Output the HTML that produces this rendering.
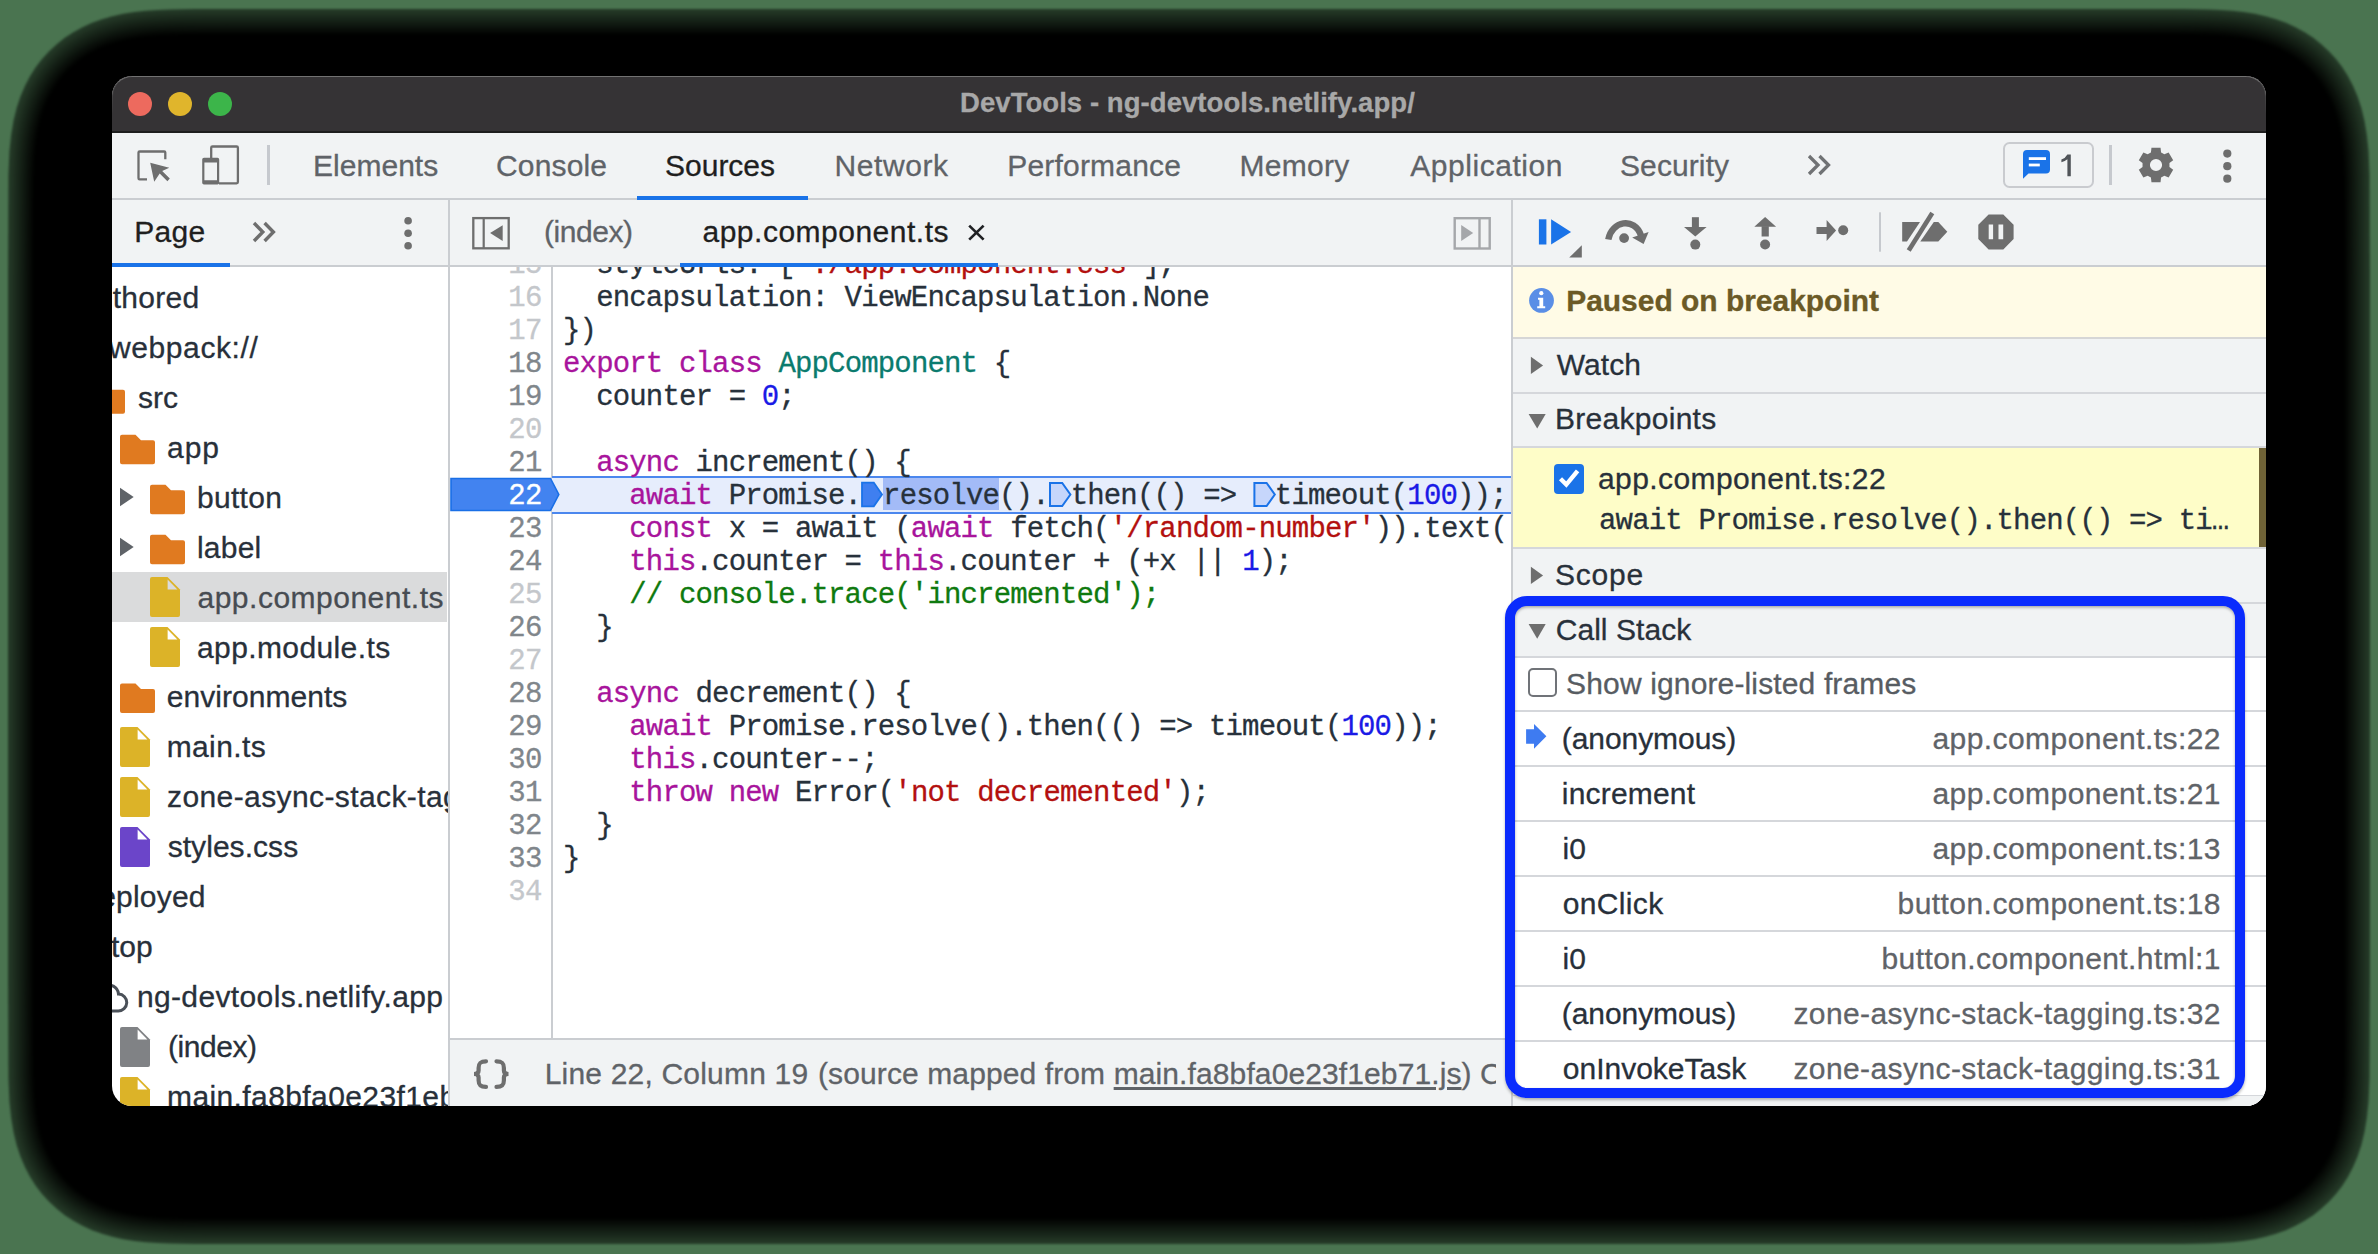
<!DOCTYPE html>
<html><head><meta charset="utf-8"><style>
html,body{margin:0;padding:0;}
body{width:2378px;height:1254px;overflow:hidden;position:relative;background:#4a7450;font-family:"Liberation Sans",sans-serif;}
.t{position:absolute;white-space:pre;-webkit-text-stroke-width:0.3px;}
.r{position:absolute;}
#ov{position:absolute;left:0;top:0;width:2378px;height:1254px;overflow:visible;}
</style></head><body>
<svg style="position:absolute;left:0;top:0;filter:blur(0.8px)" width="2378" height="1254" viewBox="0 0 2378 1254"><path d="M8.0,274.6 L8.4,175.1 L9.4,151.6 L11.2,134.5 L13.6,120.3 L16.7,107.7 L20.5,96.3 L25.0,85.8 L30.1,76.1 L35.8,67.1 L42.2,58.8 L49.1,51.2 L56.7,44.2 L64.7,37.8 L73.3,32.2 L82.4,27.2 L92.0,22.8 L102.0,19.2 L112.4,16.2 L123.1,13.8 L134.2,12.1 L145.7,10.8 L157.3,10.0 L169.3,9.5 L181.4,9.2 L193.6,9.1 L206.0,9.0 L218.5,9.0 L231.0,9.0 L2147.0,9.0 L2159.5,9.0 L2172.0,9.0 L2184.4,9.1 L2196.6,9.2 L2208.7,9.5 L2220.7,10.0 L2232.3,10.8 L2243.8,12.1 L2254.9,13.8 L2265.6,16.2 L2276.0,19.2 L2286.0,22.8 L2295.6,27.2 L2304.7,32.2 L2313.3,37.8 L2321.3,44.2 L2328.9,51.2 L2335.8,58.8 L2342.2,67.1 L2347.9,76.1 L2353.0,85.8 L2357.5,96.3 L2361.3,107.7 L2364.4,120.3 L2366.8,134.5 L2368.6,151.6 L2369.6,175.1 L2370.0,274.6 L2370.0,978.4 L2369.6,1077.9 L2368.6,1101.4 L2366.8,1118.5 L2364.4,1132.7 L2361.3,1145.3 L2357.5,1156.7 L2353.0,1167.2 L2347.9,1176.9 L2342.2,1185.9 L2335.8,1194.2 L2328.9,1201.8 L2321.3,1208.8 L2313.3,1215.2 L2304.7,1220.8 L2295.6,1225.8 L2286.0,1230.2 L2276.0,1233.8 L2265.6,1236.8 L2254.9,1239.2 L2243.8,1240.9 L2232.3,1242.2 L2220.7,1243.0 L2208.7,1243.5 L2196.6,1243.8 L2184.4,1243.9 L2172.0,1244.0 L2159.5,1244.0 L2147.0,1244.0 L231.0,1244.0 L218.5,1244.0 L206.0,1244.0 L193.6,1243.9 L181.4,1243.8 L169.3,1243.5 L157.3,1243.0 L145.7,1242.2 L134.2,1240.9 L123.1,1239.2 L112.4,1236.8 L102.0,1233.8 L92.0,1230.2 L82.4,1225.8 L73.3,1220.8 L64.7,1215.2 L56.7,1208.8 L49.1,1201.8 L42.2,1194.2 L35.8,1185.9 L30.1,1176.9 L25.0,1167.2 L20.5,1156.7 L16.7,1145.3 L13.6,1132.7 L11.2,1118.5 L9.4,1101.4 L8.4,1077.9 L8.0,978.4 Z" fill="rgb(37, 58, 40)"/><path d="M9.9,274.6 L10.2,175.5 L11.3,152.1 L13.0,135.1 L15.4,121.0 L18.5,108.5 L22.3,97.2 L26.7,86.8 L31.8,77.2 L37.5,68.3 L43.8,60.0 L50.7,52.5 L58.1,45.5 L66.1,39.3 L74.7,33.7 L83.7,28.7 L93.1,24.5 L103.1,20.9 L113.4,17.9 L124.0,15.6 L135.1,13.9 L146.4,12.7 L158.0,11.9 L169.8,11.4 L181.8,11.1 L194.0,11.0 L206.2,10.9 L218.6,10.9 L231.0,10.9 L2147.0,10.9 L2159.4,10.9 L2171.8,10.9 L2184.0,11.0 L2196.2,11.1 L2208.2,11.4 L2220.0,11.9 L2231.6,12.7 L2242.9,13.9 L2254.0,15.6 L2264.6,17.9 L2274.9,20.9 L2284.9,24.5 L2294.3,28.7 L2303.3,33.7 L2311.9,39.3 L2319.9,45.5 L2327.3,52.5 L2334.2,60.0 L2340.5,68.3 L2346.2,77.2 L2351.3,86.8 L2355.7,97.2 L2359.5,108.5 L2362.6,121.0 L2365.0,135.1 L2366.7,152.1 L2367.8,175.5 L2368.1,274.6 L2368.1,978.4 L2367.8,1077.5 L2366.7,1100.9 L2365.0,1117.9 L2362.6,1132.0 L2359.5,1144.5 L2355.7,1155.8 L2351.3,1166.2 L2346.2,1175.8 L2340.5,1184.7 L2334.2,1193.0 L2327.3,1200.5 L2319.9,1207.5 L2311.9,1213.7 L2303.3,1219.3 L2294.3,1224.3 L2284.9,1228.5 L2274.9,1232.1 L2264.6,1235.1 L2254.0,1237.4 L2242.9,1239.1 L2231.6,1240.3 L2220.0,1241.1 L2208.2,1241.6 L2196.2,1241.9 L2184.0,1242.0 L2171.8,1242.1 L2159.4,1242.1 L2147.0,1242.1 L231.0,1242.1 L218.6,1242.1 L206.2,1242.1 L194.0,1242.0 L181.8,1241.9 L169.8,1241.6 L158.0,1241.1 L146.4,1240.3 L135.1,1239.1 L124.0,1237.4 L113.4,1235.1 L103.1,1232.1 L93.1,1228.5 L83.7,1224.3 L74.7,1219.3 L66.1,1213.7 L58.1,1207.5 L50.7,1200.5 L43.8,1193.0 L37.5,1184.7 L31.8,1175.8 L26.7,1166.2 L22.3,1155.8 L18.5,1144.5 L15.4,1132.0 L13.0,1117.9 L11.3,1100.9 L10.2,1077.5 L9.9,978.4 Z" fill="rgb(34, 54, 37)"/><path d="M11.8,274.6 L12.1,175.9 L13.2,152.6 L14.9,135.7 L17.3,121.6 L20.4,109.2 L24.1,98.0 L28.5,87.7 L33.5,78.2 L39.1,69.4 L45.4,61.2 L52.2,53.8 L59.6,46.9 L67.5,40.7 L76.0,35.2 L84.9,30.3 L94.3,26.1 L104.1,22.6 L114.4,19.7 L125.0,17.4 L135.9,15.7 L147.1,14.5 L158.6,13.7 L170.3,13.3 L182.2,13.0 L194.3,12.9 L206.5,12.8 L218.7,12.8 L231.0,12.8 L2147.0,12.8 L2159.3,12.8 L2171.5,12.8 L2183.7,12.9 L2195.8,13.0 L2207.7,13.3 L2219.4,13.7 L2230.9,14.5 L2242.1,15.7 L2253.0,17.4 L2263.6,19.7 L2273.9,22.6 L2283.7,26.1 L2293.1,30.3 L2302.0,35.2 L2310.5,40.7 L2318.4,46.9 L2325.8,53.8 L2332.6,61.2 L2338.9,69.4 L2344.5,78.2 L2349.5,87.7 L2353.9,98.0 L2357.6,109.2 L2360.7,121.6 L2363.1,135.7 L2364.8,152.6 L2365.9,175.9 L2366.2,274.6 L2366.2,978.4 L2365.9,1077.1 L2364.8,1100.4 L2363.1,1117.3 L2360.7,1131.4 L2357.6,1143.8 L2353.9,1155.0 L2349.5,1165.3 L2344.5,1174.8 L2338.9,1183.6 L2332.6,1191.8 L2325.8,1199.2 L2318.4,1206.1 L2310.5,1212.3 L2302.0,1217.8 L2293.1,1222.7 L2283.7,1226.9 L2273.9,1230.4 L2263.6,1233.3 L2253.0,1235.6 L2242.1,1237.3 L2230.9,1238.5 L2219.4,1239.3 L2207.7,1239.7 L2195.8,1240.0 L2183.7,1240.1 L2171.5,1240.2 L2159.3,1240.2 L2147.0,1240.2 L231.0,1240.2 L218.7,1240.2 L206.5,1240.2 L194.3,1240.1 L182.2,1240.0 L170.3,1239.7 L158.6,1239.3 L147.1,1238.5 L135.9,1237.3 L125.0,1235.6 L114.4,1233.3 L104.1,1230.4 L94.3,1226.9 L84.9,1222.7 L76.0,1217.8 L67.5,1212.3 L59.6,1206.1 L52.2,1199.2 L45.4,1191.8 L39.1,1183.6 L33.5,1174.8 L28.5,1165.3 L24.1,1155.0 L20.4,1143.8 L17.3,1131.4 L14.9,1117.3 L13.2,1100.4 L12.1,1077.1 L11.8,978.4 Z" fill="rgb(32, 50, 34)"/><path d="M13.7,274.6 L14.0,176.2 L15.0,153.0 L16.7,136.3 L19.1,122.3 L22.2,110.0 L25.9,98.9 L30.2,88.7 L35.2,79.2 L40.8,70.5 L47.0,62.5 L53.8,55.1 L61.1,48.3 L69.0,42.2 L77.3,36.7 L86.2,31.9 L95.5,27.8 L105.2,24.3 L115.4,21.5 L125.9,19.2 L136.7,17.6 L147.8,16.4 L159.2,15.6 L170.8,15.1 L182.6,14.9 L194.6,14.8 L206.7,14.7 L218.8,14.7 L231.0,14.7 L2147.0,14.7 L2159.2,14.7 L2171.3,14.7 L2183.4,14.8 L2195.4,14.9 L2207.2,15.1 L2218.8,15.6 L2230.2,16.4 L2241.3,17.6 L2252.1,19.2 L2262.6,21.5 L2272.8,24.3 L2282.5,27.8 L2291.8,31.9 L2300.7,36.7 L2309.0,42.2 L2316.9,48.3 L2324.2,55.1 L2331.0,62.5 L2337.2,70.5 L2342.8,79.2 L2347.8,88.7 L2352.1,98.9 L2355.8,110.0 L2358.9,122.3 L2361.3,136.3 L2363.0,153.0 L2364.0,176.2 L2364.3,274.6 L2364.3,978.4 L2364.0,1076.8 L2363.0,1100.0 L2361.3,1116.7 L2358.9,1130.7 L2355.8,1143.0 L2352.1,1154.1 L2347.8,1164.3 L2342.8,1173.8 L2337.2,1182.5 L2331.0,1190.5 L2324.2,1197.9 L2316.9,1204.7 L2309.0,1210.8 L2300.7,1216.3 L2291.8,1221.1 L2282.5,1225.2 L2272.8,1228.7 L2262.6,1231.5 L2252.1,1233.8 L2241.3,1235.4 L2230.2,1236.6 L2218.8,1237.4 L2207.2,1237.9 L2195.4,1238.1 L2183.4,1238.2 L2171.3,1238.3 L2159.2,1238.3 L2147.0,1238.3 L231.0,1238.3 L218.8,1238.3 L206.7,1238.3 L194.6,1238.2 L182.6,1238.1 L170.8,1237.9 L159.2,1237.4 L147.8,1236.6 L136.7,1235.4 L125.9,1233.8 L115.4,1231.5 L105.2,1228.7 L95.5,1225.2 L86.2,1221.1 L77.3,1216.3 L69.0,1210.8 L61.1,1204.7 L53.8,1197.9 L47.0,1190.5 L40.8,1182.5 L35.2,1173.8 L30.2,1164.3 L25.9,1154.1 L22.2,1143.0 L19.1,1130.7 L16.7,1116.7 L15.0,1100.0 L14.0,1076.8 L13.7,978.4 Z" fill="rgb(29, 45, 31)"/><path d="M15.6,274.6 L15.9,176.6 L16.9,153.5 L18.6,136.8 L21.0,123.0 L24.0,110.8 L27.7,99.7 L32.0,89.6 L36.9,80.3 L42.5,71.6 L48.6,63.7 L55.3,56.4 L62.6,49.7 L70.4,43.6 L78.7,38.3 L87.4,33.5 L96.7,29.5 L106.3,26.0 L116.4,23.2 L126.8,21.0 L137.5,19.4 L148.6,18.2 L159.8,17.5 L171.4,17.0 L183.1,16.8 L194.9,16.7 L206.9,16.6 L218.9,16.6 L231.0,16.6 L2147.0,16.6 L2159.1,16.6 L2171.1,16.6 L2183.1,16.7 L2194.9,16.8 L2206.6,17.0 L2218.2,17.5 L2229.4,18.2 L2240.5,19.4 L2251.2,21.0 L2261.6,23.2 L2271.7,26.0 L2281.3,29.5 L2290.6,33.5 L2299.3,38.3 L2307.6,43.6 L2315.4,49.7 L2322.7,56.4 L2329.4,63.7 L2335.5,71.6 L2341.1,80.3 L2346.0,89.6 L2350.3,99.7 L2354.0,110.8 L2357.0,123.0 L2359.4,136.8 L2361.1,153.5 L2362.1,176.6 L2362.4,274.6 L2362.4,978.4 L2362.1,1076.4 L2361.1,1099.5 L2359.4,1116.2 L2357.0,1130.0 L2354.0,1142.2 L2350.3,1153.3 L2346.0,1163.4 L2341.1,1172.7 L2335.5,1181.4 L2329.4,1189.3 L2322.7,1196.6 L2315.4,1203.3 L2307.6,1209.4 L2299.3,1214.7 L2290.6,1219.5 L2281.3,1223.5 L2271.7,1227.0 L2261.6,1229.8 L2251.2,1232.0 L2240.5,1233.6 L2229.4,1234.8 L2218.2,1235.5 L2206.6,1236.0 L2194.9,1236.2 L2183.1,1236.3 L2171.1,1236.4 L2159.1,1236.4 L2147.0,1236.4 L231.0,1236.4 L218.9,1236.4 L206.9,1236.4 L194.9,1236.3 L183.1,1236.2 L171.4,1236.0 L159.8,1235.5 L148.6,1234.8 L137.5,1233.6 L126.8,1232.0 L116.4,1229.8 L106.3,1227.0 L96.7,1223.5 L87.4,1219.5 L78.7,1214.7 L70.4,1209.4 L62.6,1203.3 L55.3,1196.6 L48.6,1189.3 L42.5,1181.4 L36.9,1172.7 L32.0,1163.4 L27.7,1153.3 L24.0,1142.2 L21.0,1130.0 L18.6,1116.2 L16.9,1099.5 L15.9,1076.4 L15.6,978.4 Z" fill="rgb(26, 41, 28)"/><path d="M17.5,274.6 L17.8,177.0 L18.8,154.0 L20.5,137.4 L22.8,123.6 L25.8,111.5 L29.4,100.6 L33.7,90.6 L38.6,81.3 L44.1,72.8 L50.2,64.9 L56.8,57.7 L64.1,51.1 L71.8,45.1 L80.0,39.8 L88.7,35.1 L97.9,31.1 L107.4,27.7 L117.4,25.0 L127.7,22.8 L138.4,21.2 L149.3,20.1 L160.5,19.4 L171.9,18.9 L183.5,18.7 L195.2,18.5 L207.1,18.5 L219.0,18.5 L231.0,18.5 L2147.0,18.5 L2159.0,18.5 L2170.9,18.5 L2182.8,18.5 L2194.5,18.7 L2206.1,18.9 L2217.5,19.4 L2228.7,20.1 L2239.6,21.2 L2250.3,22.8 L2260.6,25.0 L2270.6,27.7 L2280.1,31.1 L2289.3,35.1 L2298.0,39.8 L2306.2,45.1 L2313.9,51.1 L2321.2,57.7 L2327.8,64.9 L2333.9,72.8 L2339.4,81.3 L2344.3,90.6 L2348.6,100.6 L2352.2,111.5 L2355.2,123.6 L2357.5,137.4 L2359.2,154.0 L2360.2,177.0 L2360.5,274.6 L2360.5,978.4 L2360.2,1076.0 L2359.2,1099.0 L2357.5,1115.6 L2355.2,1129.4 L2352.2,1141.5 L2348.6,1152.4 L2344.3,1162.4 L2339.4,1171.7 L2333.9,1180.2 L2327.8,1188.1 L2321.2,1195.3 L2313.9,1201.9 L2306.2,1207.9 L2298.0,1213.2 L2289.3,1217.9 L2280.1,1221.9 L2270.6,1225.3 L2260.6,1228.0 L2250.3,1230.2 L2239.6,1231.8 L2228.7,1232.9 L2217.5,1233.6 L2206.1,1234.1 L2194.5,1234.3 L2182.8,1234.5 L2170.9,1234.5 L2159.0,1234.5 L2147.0,1234.5 L231.0,1234.5 L219.0,1234.5 L207.1,1234.5 L195.2,1234.5 L183.5,1234.3 L171.9,1234.1 L160.5,1233.6 L149.3,1232.9 L138.4,1231.8 L127.7,1230.2 L117.4,1228.0 L107.4,1225.3 L97.9,1221.9 L88.7,1217.9 L80.0,1213.2 L71.8,1207.9 L64.1,1201.9 L56.8,1195.3 L50.2,1188.1 L44.1,1180.2 L38.6,1171.7 L33.7,1162.4 L29.4,1152.4 L25.8,1141.5 L22.8,1129.4 L20.5,1115.6 L18.8,1099.0 L17.8,1076.0 L17.5,978.4 Z" fill="rgb(23, 37, 25)"/><path d="M19.4,274.6 L19.7,177.4 L20.7,154.5 L22.3,138.0 L24.7,124.3 L27.6,112.3 L31.2,101.5 L35.5,91.5 L40.3,82.4 L45.8,73.9 L51.8,66.1 L58.4,59.0 L65.5,52.5 L73.2,46.6 L81.3,41.3 L90.0,36.7 L99.0,32.8 L108.5,29.5 L118.4,26.8 L128.6,24.6 L139.2,23.1 L150.0,22.0 L161.1,21.2 L172.4,20.8 L183.9,20.6 L195.5,20.4 L207.3,20.4 L219.1,20.4 L231.0,20.4 L2147.0,20.4 L2158.9,20.4 L2170.7,20.4 L2182.5,20.4 L2194.1,20.6 L2205.6,20.8 L2216.9,21.2 L2228.0,22.0 L2238.8,23.1 L2249.4,24.6 L2259.6,26.8 L2269.5,29.5 L2279.0,32.8 L2288.0,36.7 L2296.7,41.3 L2304.8,46.6 L2312.5,52.5 L2319.6,59.0 L2326.2,66.1 L2332.2,73.9 L2337.7,82.4 L2342.5,91.5 L2346.8,101.5 L2350.4,112.3 L2353.3,124.3 L2355.7,138.0 L2357.3,154.5 L2358.3,177.4 L2358.6,274.6 L2358.6,978.4 L2358.3,1075.6 L2357.3,1098.5 L2355.7,1115.0 L2353.3,1128.7 L2350.4,1140.7 L2346.8,1151.5 L2342.5,1161.5 L2337.7,1170.6 L2332.2,1179.1 L2326.2,1186.9 L2319.6,1194.0 L2312.5,1200.5 L2304.8,1206.4 L2296.7,1211.7 L2288.0,1216.3 L2279.0,1220.2 L2269.5,1223.5 L2259.6,1226.2 L2249.4,1228.4 L2238.8,1229.9 L2228.0,1231.0 L2216.9,1231.8 L2205.6,1232.2 L2194.1,1232.4 L2182.5,1232.6 L2170.7,1232.6 L2158.9,1232.6 L2147.0,1232.6 L231.0,1232.6 L219.1,1232.6 L207.3,1232.6 L195.5,1232.6 L183.9,1232.4 L172.4,1232.2 L161.1,1231.8 L150.0,1231.0 L139.2,1229.9 L128.6,1228.4 L118.4,1226.2 L108.5,1223.5 L99.0,1220.2 L90.0,1216.3 L81.3,1211.7 L73.2,1206.4 L65.5,1200.5 L58.4,1194.0 L51.8,1186.9 L45.8,1179.1 L40.3,1170.6 L35.5,1161.5 L31.2,1151.5 L27.6,1140.7 L24.7,1128.7 L22.3,1115.0 L20.7,1098.5 L19.7,1075.6 L19.4,978.4 Z" fill="rgb(21, 32, 22)"/><path d="M21.2,274.6 L21.6,177.7 L22.6,155.0 L24.2,138.6 L26.5,125.0 L29.4,113.1 L33.0,102.3 L37.2,92.5 L42.0,83.4 L47.4,75.1 L53.4,67.3 L59.9,60.3 L67.0,53.8 L74.6,48.0 L82.7,42.9 L91.2,38.3 L100.2,34.4 L109.6,31.2 L119.4,28.5 L129.5,26.5 L140.0,24.9 L150.7,23.8 L161.7,23.1 L172.9,22.7 L184.3,22.4 L195.9,22.3 L207.5,22.3 L219.2,22.3 L231.0,22.3 L2147.0,22.3 L2158.8,22.3 L2170.5,22.3 L2182.1,22.3 L2193.7,22.4 L2205.1,22.7 L2216.3,23.1 L2227.3,23.8 L2238.0,24.9 L2248.5,26.5 L2258.6,28.5 L2268.4,31.2 L2277.8,34.4 L2286.8,38.3 L2295.3,42.9 L2303.4,48.0 L2311.0,53.8 L2318.1,60.3 L2324.6,67.3 L2330.6,75.1 L2336.0,83.4 L2340.8,92.5 L2345.0,102.3 L2348.6,113.1 L2351.5,125.0 L2353.8,138.6 L2355.4,155.0 L2356.4,177.7 L2356.8,274.6 L2356.8,978.4 L2356.4,1075.3 L2355.4,1098.0 L2353.8,1114.4 L2351.5,1128.0 L2348.6,1139.9 L2345.0,1150.7 L2340.8,1160.5 L2336.0,1169.6 L2330.6,1177.9 L2324.6,1185.7 L2318.1,1192.7 L2311.0,1199.2 L2303.4,1205.0 L2295.3,1210.1 L2286.8,1214.7 L2277.8,1218.6 L2268.4,1221.8 L2258.6,1224.5 L2248.5,1226.5 L2238.0,1228.1 L2227.3,1229.2 L2216.3,1229.9 L2205.1,1230.3 L2193.7,1230.6 L2182.1,1230.7 L2170.5,1230.7 L2158.8,1230.7 L2147.0,1230.7 L231.0,1230.7 L219.2,1230.7 L207.5,1230.7 L195.9,1230.7 L184.3,1230.6 L172.9,1230.3 L161.7,1229.9 L150.7,1229.2 L140.0,1228.1 L129.5,1226.5 L119.4,1224.5 L109.6,1221.8 L100.2,1218.6 L91.2,1214.7 L82.7,1210.1 L74.6,1205.0 L67.0,1199.2 L59.9,1192.7 L53.4,1185.7 L47.4,1177.9 L42.0,1169.6 L37.2,1160.5 L33.0,1150.7 L29.4,1139.9 L26.5,1128.0 L24.2,1114.4 L22.6,1098.0 L21.6,1075.3 L21.2,978.4 Z" fill="rgb(18, 28, 19)"/><path d="M23.1,274.6 L23.5,178.1 L24.4,155.5 L26.1,139.2 L28.4,125.7 L31.3,113.9 L34.8,103.2 L39.0,93.5 L43.7,84.5 L49.1,76.2 L55.0,68.6 L61.5,61.6 L68.5,55.2 L76.0,49.5 L84.0,44.4 L92.5,39.9 L101.4,36.1 L110.7,32.9 L120.4,30.3 L130.5,28.3 L140.8,26.7 L151.5,25.7 L162.3,25.0 L173.5,24.6 L184.7,24.3 L196.2,24.2 L207.7,24.2 L219.3,24.2 L231.0,24.1 L2147.0,24.1 L2158.7,24.2 L2170.3,24.2 L2181.8,24.2 L2193.3,24.3 L2204.5,24.6 L2215.7,25.0 L2226.5,25.7 L2237.2,26.7 L2247.5,28.3 L2257.6,30.3 L2267.3,32.9 L2276.6,36.1 L2285.5,39.9 L2294.0,44.4 L2302.0,49.5 L2309.5,55.2 L2316.5,61.6 L2323.0,68.6 L2328.9,76.2 L2334.3,84.5 L2339.0,93.5 L2343.2,103.2 L2346.7,113.9 L2349.6,125.7 L2351.9,139.2 L2353.6,155.5 L2354.5,178.1 L2354.9,274.6 L2354.9,978.4 L2354.5,1074.9 L2353.6,1097.5 L2351.9,1113.8 L2349.6,1127.3 L2346.7,1139.1 L2343.2,1149.8 L2339.0,1159.5 L2334.3,1168.5 L2328.9,1176.8 L2323.0,1184.4 L2316.5,1191.4 L2309.5,1197.8 L2302.0,1203.5 L2294.0,1208.6 L2285.5,1213.1 L2276.6,1216.9 L2267.3,1220.1 L2257.6,1222.7 L2247.5,1224.7 L2237.2,1226.3 L2226.5,1227.3 L2215.7,1228.0 L2204.5,1228.4 L2193.3,1228.7 L2181.8,1228.8 L2170.3,1228.8 L2158.7,1228.8 L2147.0,1228.9 L231.0,1228.9 L219.3,1228.8 L207.7,1228.8 L196.2,1228.8 L184.7,1228.7 L173.5,1228.4 L162.3,1228.0 L151.5,1227.3 L140.8,1226.3 L130.5,1224.7 L120.4,1222.7 L110.7,1220.1 L101.4,1216.9 L92.5,1213.1 L84.0,1208.6 L76.0,1203.5 L68.5,1197.8 L61.5,1191.4 L55.0,1184.4 L49.1,1176.8 L43.7,1168.5 L39.0,1159.5 L34.8,1149.8 L31.3,1139.1 L28.4,1127.3 L26.1,1113.8 L24.4,1097.5 L23.5,1074.9 L23.1,978.4 Z" fill="rgb(15, 24, 16)"/><path d="M25.0,274.6 L25.4,178.5 L26.3,156.0 L27.9,139.8 L30.2,126.4 L33.1,114.6 L36.6,104.1 L40.7,94.4 L45.4,85.5 L50.7,77.4 L56.6,69.8 L63.0,62.9 L70.0,56.6 L77.4,51.0 L85.4,46.0 L93.8,41.6 L102.6,37.8 L111.8,34.6 L121.4,32.1 L131.4,30.1 L141.6,28.6 L152.2,27.5 L163.0,26.9 L174.0,26.4 L185.2,26.2 L196.5,26.1 L207.9,26.1 L219.5,26.0 L231.0,26.0 L2147.0,26.0 L2158.5,26.0 L2170.1,26.1 L2181.5,26.1 L2192.8,26.2 L2204.0,26.4 L2215.0,26.9 L2225.8,27.5 L2236.4,28.6 L2246.6,30.1 L2256.6,32.1 L2266.2,34.6 L2275.4,37.8 L2284.2,41.6 L2292.6,46.0 L2300.6,51.0 L2308.0,56.6 L2315.0,62.9 L2321.4,69.8 L2327.3,77.4 L2332.6,85.5 L2337.3,94.4 L2341.4,104.1 L2344.9,114.6 L2347.8,126.4 L2350.1,139.8 L2351.7,156.0 L2352.6,178.5 L2353.0,274.6 L2353.0,978.4 L2352.6,1074.5 L2351.7,1097.0 L2350.1,1113.2 L2347.8,1126.6 L2344.9,1138.4 L2341.4,1148.9 L2337.3,1158.6 L2332.6,1167.5 L2327.3,1175.6 L2321.4,1183.2 L2315.0,1190.1 L2308.0,1196.4 L2300.6,1202.0 L2292.6,1207.0 L2284.2,1211.4 L2275.4,1215.2 L2266.2,1218.4 L2256.6,1220.9 L2246.6,1222.9 L2236.4,1224.4 L2225.8,1225.5 L2215.0,1226.1 L2204.0,1226.6 L2192.8,1226.8 L2181.5,1226.9 L2170.1,1226.9 L2158.5,1227.0 L2147.0,1227.0 L231.0,1227.0 L219.5,1227.0 L207.9,1226.9 L196.5,1226.9 L185.2,1226.8 L174.0,1226.6 L163.0,1226.1 L152.2,1225.5 L141.6,1224.4 L131.4,1222.9 L121.4,1220.9 L111.8,1218.4 L102.6,1215.2 L93.8,1211.4 L85.4,1207.0 L77.4,1202.0 L70.0,1196.4 L63.0,1190.1 L56.6,1183.2 L50.7,1175.6 L45.4,1167.5 L40.7,1158.6 L36.6,1148.9 L33.1,1138.4 L30.2,1126.6 L27.9,1113.2 L26.3,1097.0 L25.4,1074.5 L25.0,978.4 Z" fill="rgb(12, 19, 13)"/><path d="M26.9,274.6 L27.2,178.9 L28.2,156.5 L29.8,140.4 L32.0,127.1 L34.9,115.4 L38.4,105.0 L42.5,95.4 L47.1,86.6 L52.4,78.5 L58.2,71.1 L64.6,64.2 L71.5,58.0 L78.8,52.5 L86.7,47.5 L95.0,43.2 L103.8,39.5 L112.9,36.4 L122.4,33.8 L132.3,31.9 L142.5,30.4 L152.9,29.4 L163.6,28.7 L174.5,28.3 L185.6,28.1 L196.8,28.0 L208.2,28.0 L219.6,27.9 L231.0,27.9 L2147.0,27.9 L2158.4,27.9 L2169.8,28.0 L2181.2,28.0 L2192.4,28.1 L2203.5,28.3 L2214.4,28.7 L2225.1,29.4 L2235.5,30.4 L2245.7,31.9 L2255.6,33.8 L2265.1,36.4 L2274.2,39.5 L2283.0,43.2 L2291.3,47.5 L2299.2,52.5 L2306.5,58.0 L2313.4,64.2 L2319.8,71.1 L2325.6,78.5 L2330.9,86.6 L2335.5,95.4 L2339.6,105.0 L2343.1,115.4 L2346.0,127.1 L2348.2,140.4 L2349.8,156.5 L2350.8,178.9 L2351.1,274.6 L2351.1,978.4 L2350.8,1074.1 L2349.8,1096.5 L2348.2,1112.6 L2346.0,1125.9 L2343.1,1137.6 L2339.6,1148.0 L2335.5,1157.6 L2330.9,1166.4 L2325.6,1174.5 L2319.8,1181.9 L2313.4,1188.8 L2306.5,1195.0 L2299.2,1200.5 L2291.3,1205.5 L2283.0,1209.8 L2274.2,1213.5 L2265.1,1216.6 L2255.6,1219.2 L2245.7,1221.1 L2235.5,1222.6 L2225.1,1223.6 L2214.4,1224.3 L2203.5,1224.7 L2192.4,1224.9 L2181.2,1225.0 L2169.8,1225.0 L2158.4,1225.1 L2147.0,1225.1 L231.0,1225.1 L219.6,1225.1 L208.2,1225.0 L196.8,1225.0 L185.6,1224.9 L174.5,1224.7 L163.6,1224.3 L152.9,1223.6 L142.5,1222.6 L132.3,1221.1 L122.4,1219.2 L112.9,1216.6 L103.8,1213.5 L95.0,1209.8 L86.7,1205.5 L78.8,1200.5 L71.5,1195.0 L64.6,1188.8 L58.2,1181.9 L52.4,1174.5 L47.1,1166.4 L42.5,1157.6 L38.4,1148.0 L34.9,1137.6 L32.0,1125.9 L29.8,1112.6 L28.2,1096.5 L27.2,1074.1 L26.9,978.4 Z" fill="rgb(10, 15, 10)"/><path d="M28.8,274.6 L29.1,179.3 L30.1,157.0 L31.7,141.0 L33.9,127.8 L36.7,116.2 L40.2,105.8 L44.2,96.4 L48.8,87.7 L54.0,79.7 L59.8,72.3 L66.1,65.6 L72.9,59.4 L80.2,53.9 L88.0,49.1 L96.3,44.8 L104.9,41.1 L114.0,38.1 L123.4,35.6 L133.2,33.7 L143.3,32.3 L153.6,31.3 L164.2,30.6 L175.0,30.2 L186.0,30.0 L197.1,29.9 L208.4,29.8 L219.7,29.8 L231.0,29.8 L2147.0,29.8 L2158.3,29.8 L2169.6,29.8 L2180.9,29.9 L2192.0,30.0 L2203.0,30.2 L2213.8,30.6 L2224.4,31.3 L2234.7,32.3 L2244.8,33.7 L2254.6,35.6 L2264.0,38.1 L2273.1,41.1 L2281.7,44.8 L2290.0,49.1 L2297.8,53.9 L2305.1,59.4 L2311.9,65.6 L2318.2,72.3 L2324.0,79.7 L2329.2,87.7 L2333.8,96.4 L2337.8,105.8 L2341.3,116.2 L2344.1,127.8 L2346.3,141.0 L2347.9,157.0 L2348.9,179.3 L2349.2,274.6 L2349.2,978.4 L2348.9,1073.7 L2347.9,1096.0 L2346.3,1112.0 L2344.1,1125.2 L2341.3,1136.8 L2337.8,1147.2 L2333.8,1156.6 L2329.2,1165.3 L2324.0,1173.3 L2318.2,1180.7 L2311.9,1187.4 L2305.1,1193.6 L2297.8,1199.1 L2290.0,1203.9 L2281.7,1208.2 L2273.1,1211.9 L2264.0,1214.9 L2254.6,1217.4 L2244.8,1219.3 L2234.7,1220.7 L2224.4,1221.7 L2213.8,1222.4 L2203.0,1222.8 L2192.0,1223.0 L2180.9,1223.1 L2169.6,1223.2 L2158.3,1223.2 L2147.0,1223.2 L231.0,1223.2 L219.7,1223.2 L208.4,1223.2 L197.1,1223.1 L186.0,1223.0 L175.0,1222.8 L164.2,1222.4 L153.6,1221.7 L143.3,1220.7 L133.2,1219.3 L123.4,1217.4 L114.0,1214.9 L104.9,1211.9 L96.3,1208.2 L88.0,1203.9 L80.2,1199.1 L72.9,1193.6 L66.1,1187.4 L59.8,1180.7 L54.0,1173.3 L48.8,1165.3 L44.2,1156.6 L40.2,1147.2 L36.7,1136.8 L33.9,1125.2 L31.7,1112.0 L30.1,1096.0 L29.1,1073.7 L28.8,978.4 Z" fill="rgb(7, 11, 7)"/><path d="M30.7,274.6 L31.0,179.7 L32.0,157.5 L33.5,141.6 L35.7,128.5 L38.5,117.0 L42.0,106.7 L46.0,97.4 L50.5,88.7 L55.7,80.8 L61.4,73.5 L67.7,66.9 L74.4,60.8 L81.7,55.4 L89.4,50.6 L97.5,46.4 L106.1,42.8 L115.1,39.8 L124.4,37.4 L134.1,35.5 L144.1,34.1 L154.4,33.1 L164.8,32.5 L175.6,32.1 L186.4,31.9 L197.5,31.8 L208.6,31.7 L219.8,31.7 L231.0,31.7 L2147.0,31.7 L2158.2,31.7 L2169.4,31.7 L2180.5,31.8 L2191.6,31.9 L2202.4,32.1 L2213.2,32.5 L2223.6,33.1 L2233.9,34.1 L2243.9,35.5 L2253.6,37.4 L2262.9,39.8 L2271.9,42.8 L2280.5,46.4 L2288.6,50.6 L2296.3,55.4 L2303.6,60.8 L2310.3,66.9 L2316.6,73.5 L2322.3,80.8 L2327.5,88.7 L2332.0,97.4 L2336.0,106.7 L2339.5,117.0 L2342.3,128.5 L2344.5,141.6 L2346.0,157.5 L2347.0,179.7 L2347.3,274.6 L2347.3,978.4 L2347.0,1073.3 L2346.0,1095.5 L2344.5,1111.4 L2342.3,1124.5 L2339.5,1136.0 L2336.0,1146.3 L2332.0,1155.6 L2327.5,1164.3 L2322.3,1172.2 L2316.6,1179.5 L2310.3,1186.1 L2303.6,1192.2 L2296.3,1197.6 L2288.6,1202.4 L2280.5,1206.6 L2271.9,1210.2 L2262.9,1213.2 L2253.6,1215.6 L2243.9,1217.5 L2233.9,1218.9 L2223.6,1219.9 L2213.2,1220.5 L2202.4,1220.9 L2191.6,1221.1 L2180.5,1221.2 L2169.4,1221.3 L2158.2,1221.3 L2147.0,1221.3 L231.0,1221.3 L219.8,1221.3 L208.6,1221.3 L197.5,1221.2 L186.4,1221.1 L175.6,1220.9 L164.8,1220.5 L154.4,1219.9 L144.1,1218.9 L134.1,1217.5 L124.4,1215.6 L115.1,1213.2 L106.1,1210.2 L97.5,1206.6 L89.4,1202.4 L81.7,1197.6 L74.4,1192.2 L67.7,1186.1 L61.4,1179.5 L55.7,1172.2 L50.5,1164.3 L46.0,1155.6 L42.0,1146.3 L38.5,1136.0 L35.7,1124.5 L33.5,1111.4 L32.0,1095.5 L31.0,1073.3 L30.7,978.4 Z" fill="rgb(4, 6, 4)"/><path d="M32.6,274.6 L32.9,180.1 L33.9,158.0 L35.4,142.2 L37.6,129.2 L40.4,117.8 L43.7,107.6 L47.7,98.3 L52.3,89.8 L57.4,82.0 L63.0,74.8 L69.2,68.2 L75.9,62.3 L83.1,56.9 L90.7,52.2 L98.8,48.0 L107.3,44.5 L116.2,41.5 L125.4,39.2 L135.0,37.3 L144.9,36.0 L155.1,35.0 L165.5,34.4 L176.1,34.0 L186.9,33.8 L197.8,33.7 L208.8,33.6 L219.9,33.6 L231.0,33.6 L2147.0,33.6 L2158.1,33.6 L2169.2,33.6 L2180.2,33.7 L2191.1,33.8 L2201.9,34.0 L2212.5,34.4 L2222.9,35.0 L2233.1,36.0 L2243.0,37.3 L2252.6,39.2 L2261.8,41.5 L2270.7,44.5 L2279.2,48.0 L2287.3,52.2 L2294.9,56.9 L2302.1,62.3 L2308.8,68.2 L2315.0,74.8 L2320.6,82.0 L2325.7,89.8 L2330.3,98.3 L2334.3,107.6 L2337.6,117.8 L2340.4,129.2 L2342.6,142.2 L2344.1,158.0 L2345.1,180.1 L2345.4,274.6 L2345.4,978.4 L2345.1,1072.9 L2344.1,1095.0 L2342.6,1110.8 L2340.4,1123.8 L2337.6,1135.2 L2334.3,1145.4 L2330.3,1154.7 L2325.7,1163.2 L2320.6,1171.0 L2315.0,1178.2 L2308.8,1184.8 L2302.1,1190.7 L2294.9,1196.1 L2287.3,1200.8 L2279.2,1205.0 L2270.7,1208.5 L2261.8,1211.5 L2252.6,1213.8 L2243.0,1215.7 L2233.1,1217.0 L2222.9,1218.0 L2212.5,1218.6 L2201.9,1219.0 L2191.1,1219.2 L2180.2,1219.3 L2169.2,1219.4 L2158.1,1219.4 L2147.0,1219.4 L231.0,1219.4 L219.9,1219.4 L208.8,1219.4 L197.8,1219.3 L186.9,1219.2 L176.1,1219.0 L165.5,1218.6 L155.1,1218.0 L144.9,1217.0 L135.0,1215.7 L125.4,1213.8 L116.2,1211.5 L107.3,1208.5 L98.8,1205.0 L90.7,1200.8 L83.1,1196.1 L75.9,1190.7 L69.2,1184.8 L63.0,1178.2 L57.4,1171.0 L52.3,1163.2 L47.7,1154.7 L43.7,1145.4 L40.4,1135.2 L37.6,1123.8 L35.4,1110.8 L33.9,1095.0 L32.9,1072.9 L32.6,978.4 Z" fill="rgb(1, 2, 1)"/><path d="M34.5,274.6 L34.8,180.5 L35.7,158.5 L37.3,142.8 L39.4,129.9 L42.2,118.6 L45.5,108.5 L49.5,99.3 L54.0,90.9 L59.0,83.2 L64.6,76.0 L70.7,69.6 L77.4,63.7 L84.5,58.4 L92.1,53.7 L100.1,49.6 L108.5,46.2 L117.3,43.3 L126.5,40.9 L135.9,39.1 L145.7,37.8 L155.8,36.9 L166.1,36.2 L176.6,35.9 L187.3,35.7 L198.1,35.6 L209.0,35.5 L220.0,35.5 L231.0,35.5 L2147.0,35.5 L2158.0,35.5 L2169.0,35.5 L2179.9,35.6 L2190.7,35.7 L2201.4,35.9 L2211.9,36.2 L2222.2,36.9 L2232.3,37.8 L2242.1,39.1 L2251.5,40.9 L2260.7,43.3 L2269.5,46.2 L2277.9,49.6 L2285.9,53.7 L2293.5,58.4 L2300.6,63.7 L2307.3,69.6 L2313.4,76.0 L2319.0,83.2 L2324.0,90.9 L2328.5,99.3 L2332.5,108.5 L2335.8,118.6 L2338.6,129.9 L2340.7,142.8 L2342.3,158.5 L2343.2,180.5 L2343.5,274.6 L2343.5,978.4 L2343.2,1072.5 L2342.3,1094.5 L2340.7,1110.2 L2338.6,1123.1 L2335.8,1134.4 L2332.5,1144.5 L2328.5,1153.7 L2324.0,1162.1 L2319.0,1169.8 L2313.4,1177.0 L2307.3,1183.4 L2300.6,1189.3 L2293.5,1194.6 L2285.9,1199.3 L2277.9,1203.4 L2269.5,1206.8 L2260.7,1209.7 L2251.5,1212.1 L2242.1,1213.9 L2232.3,1215.2 L2222.2,1216.1 L2211.9,1216.8 L2201.4,1217.1 L2190.7,1217.3 L2179.9,1217.4 L2169.0,1217.5 L2158.0,1217.5 L2147.0,1217.5 L231.0,1217.5 L220.0,1217.5 L209.0,1217.5 L198.1,1217.4 L187.3,1217.3 L176.6,1217.1 L166.1,1216.8 L155.8,1216.1 L145.7,1215.2 L135.9,1213.9 L126.5,1212.1 L117.3,1209.7 L108.5,1206.8 L100.1,1203.4 L92.1,1199.3 L84.5,1194.6 L77.4,1189.3 L70.7,1183.4 L64.6,1177.0 L59.0,1169.8 L54.0,1162.1 L49.5,1153.7 L45.5,1144.5 L42.2,1134.4 L39.4,1123.1 L37.3,1110.2 L35.7,1094.5 L34.8,1072.5 L34.5,978.4 Z" fill="#000"/></svg>
<div id="win" style="position:absolute;left:112px;top:76px;width:2154px;height:1030px;border-radius:20px;overflow:hidden;background:#fff;">
<div class="r" style="left:0.00px;top:0.00px;width:2154.00px;height:56.00px;background:#353335;"></div>
<div class="r" style="left:0.00px;top:0.00px;width:2154.00px;height:40.00px;background:transparent;box-sizing:border-box;border-top:1.5px solid #737373;border-left:1px solid #555;border-right:1px solid #555;border-radius:20px 20px 0 0;-webkit-mask-image:linear-gradient(#000,transparent)"></div>
<div class="r" style="left:16.00px;top:16.00px;width:24.00px;height:24.00px;background:#ed6a5e;border-radius:50%"></div>
<div class="r" style="left:56.00px;top:16.00px;width:24.00px;height:24.00px;background:#e0b52c;border-radius:50%"></div>
<div class="r" style="left:96.00px;top:16.00px;width:24.00px;height:24.00px;background:#3cb54a;border-radius:50%"></div>
<div class="t" style="left:848.00px;top:12.72px;font-size:27.5px;line-height:27.5px;color:#a8a8a8;font-weight:700;font-family:'Liberation Sans', sans-serif;letter-spacing:0.06px;">DevTools - ng-devtools.netlify.app/</div>
<div class="r" style="left:0.00px;top:55.00px;width:2154.00px;height:1.50px;background:#1e1e1e;"></div>
<div class="r" style="left:0.00px;top:56.50px;width:2154.00px;height:67.00px;background:#f1f3f4;"></div>
<div class="r" style="left:0.00px;top:122.00px;width:2154.00px;height:2.00px;background:#cacdd1;"></div>
<div class="t" style="left:201.10px;top:74.60px;font-size:30px;line-height:30px;color:#5f6368;font-weight:400;font-family:'Liberation Sans', sans-serif;letter-spacing:0px;">Elements</div>
<div class="t" style="left:384.00px;top:74.60px;font-size:30px;line-height:30px;color:#5f6368;font-weight:400;font-family:'Liberation Sans', sans-serif;letter-spacing:0.15px;">Console</div>
<div class="t" style="left:553.00px;top:74.60px;font-size:30px;line-height:30px;color:#1f1f1f;font-weight:400;font-family:'Liberation Sans', sans-serif;">Sources</div>
<div class="t" style="left:722.50px;top:74.60px;font-size:30px;line-height:30px;color:#5f6368;font-weight:400;font-family:'Liberation Sans', sans-serif;letter-spacing:0.6px;">Network</div>
<div class="t" style="left:895.20px;top:74.60px;font-size:30px;line-height:30px;color:#5f6368;font-weight:400;font-family:'Liberation Sans', sans-serif;letter-spacing:0.2px;">Performance</div>
<div class="t" style="left:1127.40px;top:74.60px;font-size:30px;line-height:30px;color:#5f6368;font-weight:400;font-family:'Liberation Sans', sans-serif;letter-spacing:0.3px;">Memory</div>
<div class="t" style="left:1298.30px;top:74.60px;font-size:30px;line-height:30px;color:#5f6368;font-weight:400;font-family:'Liberation Sans', sans-serif;letter-spacing:0.54px;">Application</div>
<div class="t" style="left:1508.00px;top:74.60px;font-size:30px;line-height:30px;color:#5f6368;font-weight:400;font-family:'Liberation Sans', sans-serif;letter-spacing:0.1px;">Security</div>
<div class="r" style="left:525.00px;top:120.00px;width:171.00px;height:4.00px;background:#1a73e8;"></div>
<div class="r" style="left:155.00px;top:69.00px;width:2.50px;height:40.00px;background:#c6c9ce;"></div>
<div class="r" style="left:1997.00px;top:69.00px;width:2.50px;height:40.00px;background:#c6c9ce;"></div>
<div class="r" style="left:1891.00px;top:66.00px;width:90.50px;height:46.00px;background:transparent;box-sizing:border-box;border:2.2px solid #c9cbcf;border-radius:6.5px"></div>
<div class="r" style="left:0.00px;top:124.00px;width:2154.00px;height:67.00px;background:#f1f3f4;"></div>
<div class="r" style="left:0.00px;top:189.00px;width:2154.00px;height:2.00px;background:#cacdd1;"></div>
<div class="t" style="left:22.30px;top:140.60px;font-size:30px;line-height:30px;color:#1f1f1f;font-weight:400;font-family:'Liberation Sans', sans-serif;letter-spacing:0.3px;">Page</div>
<div class="r" style="left:0.00px;top:187.00px;width:118.00px;height:4.00px;background:#1a73e8;"></div>
<div class="t" style="left:432.00px;top:140.60px;font-size:30px;line-height:30px;color:#5f6368;font-weight:400;font-family:'Liberation Sans', sans-serif;letter-spacing:-0.45px;">(index)</div>
<div class="t" style="left:590.50px;top:140.60px;font-size:30px;line-height:30px;color:#1f1f1f;font-weight:400;font-family:'Liberation Sans', sans-serif;letter-spacing:0.5px;">app.component.ts</div>
<div class="r" style="left:568.00px;top:187.00px;width:318.00px;height:4.00px;background:#1a73e8;"></div>
<div class="r" style="left:0.00px;top:496.00px;width:335.00px;height:49.75px;background:#dadbdc;"></div>
<div class="t" style="left:-36.60px;top:206.60px;font-size:30px;line-height:30px;color:#28303a;font-weight:400;font-family:'Liberation Sans', sans-serif;letter-spacing:0.3px;">Authored</div>
<div class="t" style="left:-3.00px;top:256.60px;font-size:30px;line-height:30px;color:#28303a;font-weight:400;font-family:'Liberation Sans', sans-serif;letter-spacing:0.6px;">webpack://</div>
<div class="t" style="left:26.00px;top:306.60px;font-size:30px;line-height:30px;color:#28303a;font-weight:400;font-family:'Liberation Sans', sans-serif;letter-spacing:0px;">src</div>
<div class="t" style="left:55.00px;top:356.60px;font-size:30px;line-height:30px;color:#28303a;font-weight:400;font-family:'Liberation Sans', sans-serif;letter-spacing:1.0px;">app</div>
<div class="t" style="left:85.00px;top:406.60px;font-size:30px;line-height:30px;color:#28303a;font-weight:400;font-family:'Liberation Sans', sans-serif;letter-spacing:0.3px;">button</div>
<div class="t" style="left:85.00px;top:456.60px;font-size:30px;line-height:30px;color:#28303a;font-weight:400;font-family:'Liberation Sans', sans-serif;letter-spacing:0.2px;">label</div>
<div class="t" style="left:85.50px;top:506.60px;font-size:30px;line-height:30px;color:#474c52;font-weight:400;font-family:'Liberation Sans', sans-serif;letter-spacing:0.5px;">app.component.ts</div>
<div class="t" style="left:85.00px;top:556.60px;font-size:30px;line-height:30px;color:#28303a;font-weight:400;font-family:'Liberation Sans', sans-serif;letter-spacing:0.39px;">app.module.ts</div>
<div class="t" style="left:54.70px;top:605.60px;font-size:30px;line-height:30px;color:#28303a;font-weight:400;font-family:'Liberation Sans', sans-serif;letter-spacing:0.05px;">environments</div>
<div class="t" style="left:54.70px;top:655.60px;font-size:30px;line-height:30px;color:#28303a;font-weight:400;font-family:'Liberation Sans', sans-serif;letter-spacing:0.38px;">main.ts</div>
<div class="t" style="left:55.00px;top:705.60px;font-size:30px;line-height:30px;color:#28303a;font-weight:400;font-family:'Liberation Sans', sans-serif;letter-spacing:0.4px;">zone-async-stack-tagging.ts</div>
<div class="t" style="left:55.70px;top:755.60px;font-size:30px;line-height:30px;color:#28303a;font-weight:400;font-family:'Liberation Sans', sans-serif;letter-spacing:0.05px;">styles.css</div>
<div class="t" style="left:-34.70px;top:805.60px;font-size:30px;line-height:30px;color:#28303a;font-weight:400;font-family:'Liberation Sans', sans-serif;letter-spacing:0.2px;">Deployed</div>
<div class="t" style="left:-1.00px;top:855.60px;font-size:30px;line-height:30px;color:#28303a;font-weight:400;font-family:'Liberation Sans', sans-serif;letter-spacing:0px;">top</div>
<div class="t" style="left:24.90px;top:905.60px;font-size:30px;line-height:30px;color:#28303a;font-weight:400;font-family:'Liberation Sans', sans-serif;letter-spacing:0.37px;">ng-devtools.netlify.app</div>
<div class="t" style="left:56.00px;top:955.60px;font-size:30px;line-height:30px;color:#28303a;font-weight:400;font-family:'Liberation Sans', sans-serif;letter-spacing:-0.45px;">(index)</div>
<div class="t" style="left:55.00px;top:1005.60px;font-size:30px;line-height:30px;color:#28303a;font-weight:400;font-family:'Liberation Sans', sans-serif;letter-spacing:0.4px;">main.fa8bfa0e23f1eb71.js</div>
<div class="r" style="left:336.00px;top:123.00px;width:2.00px;height:907.00px;background:#cacdd1;"></div>
<div class="r" style="left:338.00px;top:190.00px;width:1061.00px;height:773.00px;background:#ffffff;"></div>
<div class="r" style="left:438.50px;top:190.00px;width:2.00px;height:773.00px;background:#cacdd1;"></div>
<div class="r" style="left:440.00px;top:400.00px;width:959.00px;height:37.50px;background:#e6edfc;"></div>
<div class="r" style="left:440.00px;top:400.00px;width:959.00px;height:2.00px;background:#4b87ee;"></div>
<div class="r" style="left:440.00px;top:435.50px;width:959.00px;height:2.00px;background:#4b87ee;"></div>
<div class="r" style="left:771.00px;top:402.00px;width:116.00px;height:32.00px;background:#a3bbf7;"></div>
<div class="t" style="left:451.00px;top:174.78px;font-size:29px;line-height:29px;letter-spacing:-0.84px;font-family:'Liberation Mono', monospace;color:#27313b"><span style="color:#27313b">  styleUrls: [</span><span style="color:#b3100f">'./app.component.css'</span><span style="color:#27313b">],</span></div>
<div class="t" style="left:451.00px;top:207.78px;font-size:29px;line-height:29px;letter-spacing:-0.84px;font-family:'Liberation Mono', monospace;color:#27313b"><span style="color:#27313b">  encapsulation: ViewEncapsulation.None</span></div>
<div class="t" style="left:451.00px;top:240.78px;font-size:29px;line-height:29px;letter-spacing:-0.84px;font-family:'Liberation Mono', monospace;color:#27313b"><span style="color:#27313b">})</span></div>
<div class="t" style="left:451.00px;top:273.78px;font-size:29px;line-height:29px;letter-spacing:-0.84px;font-family:'Liberation Mono', monospace;color:#27313b"><span style="color:#a8149c">export</span><span style="color:#27313b"> </span><span style="color:#a8149c">class</span><span style="color:#27313b"> </span><span style="color:#0b7b6e">AppComponent</span><span style="color:#27313b"> {</span></div>
<div class="t" style="left:451.00px;top:306.78px;font-size:29px;line-height:29px;letter-spacing:-0.84px;font-family:'Liberation Mono', monospace;color:#27313b"><span style="color:#27313b">  counter = </span><span style="color:#1a1ae6">0</span><span style="color:#27313b">;</span></div>
<div class="t" style="left:451.00px;top:372.78px;font-size:29px;line-height:29px;letter-spacing:-0.84px;font-family:'Liberation Mono', monospace;color:#27313b"><span style="color:#27313b">  </span><span style="color:#a8149c">async</span><span style="color:#27313b"> increment() {</span></div>
<div class="t" style="left:451.00px;top:438.78px;font-size:29px;line-height:29px;letter-spacing:-0.84px;font-family:'Liberation Mono', monospace;color:#27313b"><span style="color:#27313b">    </span><span style="color:#a8149c">const</span><span style="color:#27313b"> x = await (</span><span style="color:#a8149c">await</span><span style="color:#27313b"> fetch(</span><span style="color:#b3100f">'/random-number'</span><span style="color:#27313b">)).text();</span></div>
<div class="t" style="left:451.00px;top:471.78px;font-size:29px;line-height:29px;letter-spacing:-0.84px;font-family:'Liberation Mono', monospace;color:#27313b"><span style="color:#27313b">    </span><span style="color:#a8149c">this</span><span style="color:#27313b">.counter = </span><span style="color:#a8149c">this</span><span style="color:#27313b">.counter + (+x || </span><span style="color:#1a1ae6">1</span><span style="color:#27313b">);</span></div>
<div class="t" style="left:451.00px;top:504.78px;font-size:29px;line-height:29px;letter-spacing:-0.84px;font-family:'Liberation Mono', monospace;color:#27313b"><span style="color:#0f7a0f">    // console.trace('incremented');</span></div>
<div class="t" style="left:451.00px;top:537.78px;font-size:29px;line-height:29px;letter-spacing:-0.84px;font-family:'Liberation Mono', monospace;color:#27313b"><span style="color:#27313b">  }</span></div>
<div class="t" style="left:451.00px;top:603.78px;font-size:29px;line-height:29px;letter-spacing:-0.84px;font-family:'Liberation Mono', monospace;color:#27313b"><span style="color:#27313b">  </span><span style="color:#a8149c">async</span><span style="color:#27313b"> decrement() {</span></div>
<div class="t" style="left:451.00px;top:636.78px;font-size:29px;line-height:29px;letter-spacing:-0.84px;font-family:'Liberation Mono', monospace;color:#27313b"><span style="color:#27313b">    </span><span style="color:#a8149c">await</span><span style="color:#27313b"> Promise.resolve().then(() => timeout(</span><span style="color:#1a1ae6">100</span><span style="color:#27313b">));</span></div>
<div class="t" style="left:451.00px;top:669.78px;font-size:29px;line-height:29px;letter-spacing:-0.84px;font-family:'Liberation Mono', monospace;color:#27313b"><span style="color:#27313b">    </span><span style="color:#a8149c">this</span><span style="color:#27313b">.counter--;</span></div>
<div class="t" style="left:451.00px;top:702.78px;font-size:29px;line-height:29px;letter-spacing:-0.84px;font-family:'Liberation Mono', monospace;color:#27313b"><span style="color:#27313b">    </span><span style="color:#a8149c">throw</span><span style="color:#27313b"> </span><span style="color:#a8149c">new</span><span style="color:#27313b"> Error(</span><span style="color:#b3100f">'not decremented'</span><span style="color:#27313b">);</span></div>
<div class="t" style="left:451.00px;top:735.78px;font-size:29px;line-height:29px;letter-spacing:-0.84px;font-family:'Liberation Mono', monospace;color:#27313b"><span style="color:#27313b">  }</span></div>
<div class="t" style="left:451.00px;top:768.78px;font-size:29px;line-height:29px;letter-spacing:-0.84px;font-family:'Liberation Mono', monospace;color:#27313b"><span style="color:#27313b">}</span></div>
<div class="t" style="left:451.00px;top:405.78px;font-size:29px;line-height:29px;letter-spacing:-0.84px;font-family:'Liberation Mono', monospace;color:#27313b"><span style="color:#27313b">    </span><span style="color:#a8149c">await</span><span style="color:#27313b"> Promise.</span></div>
<div class="t" style="left:771.08px;top:405.78px;font-size:29px;line-height:29px;letter-spacing:-0.84px;font-family:'Liberation Mono', monospace;color:#27313b"><span style="color:#27313b">resolve().</span></div>
<div class="t" style="left:958.68px;top:405.78px;font-size:29px;line-height:29px;letter-spacing:-0.84px;font-family:'Liberation Mono', monospace;color:#27313b"><span style="color:#27313b">then(() => </span></div>
<div class="t" style="left:1162.84px;top:405.78px;font-size:29px;line-height:29px;letter-spacing:-0.84px;font-family:'Liberation Mono', monospace;color:#27313b"><span style="color:#27313b">timeout(</span><span style="color:#1a1ae6">100</span><span style="color:#27313b">));</span></div>
<svg style="position:absolute;left:-112px;top:-76px" width="2378" height="1254" viewBox="0 0 2378 1254"><path d="M451,478.5 H550.5 L558.8,494.5 L550.5,510.5 H451 Z" fill="#4283f0" stroke="#1a6fe6" stroke-width="1.6"/><path d="M862,482.6 H873.8 L882,494.5 L873.8,506.3 H862 Z" fill="#3f7ff0" stroke="#1a73e8" stroke-width="1.8"/><path d="M1050,482.9 H1062.2 L1070.4,494.5 L1062.2,506 H1050 Z" fill="#c6d6fb" stroke="#1a73e8" stroke-width="2"/><path d="M1254.4,482.9 H1266.6 L1274.8,494.5 L1266.6,506 H1254.4 Z" fill="#c6d6fb" stroke="#1a73e8" stroke-width="2"/></svg>
<div class="t" style="right:1724.50px;top:174.78px;font-size:29px;line-height:29px;letter-spacing:-0.84px;font-family:'Liberation Mono', monospace;color:#c4c7cb">15</div>
<div class="t" style="right:1724.50px;top:207.78px;font-size:29px;line-height:29px;letter-spacing:-0.84px;font-family:'Liberation Mono', monospace;color:#c4c7cb">16</div>
<div class="t" style="right:1724.50px;top:240.78px;font-size:29px;line-height:29px;letter-spacing:-0.84px;font-family:'Liberation Mono', monospace;color:#c4c7cb">17</div>
<div class="t" style="right:1724.50px;top:273.78px;font-size:29px;line-height:29px;letter-spacing:-0.84px;font-family:'Liberation Mono', monospace;color:#80868b">18</div>
<div class="t" style="right:1724.50px;top:306.78px;font-size:29px;line-height:29px;letter-spacing:-0.84px;font-family:'Liberation Mono', monospace;color:#80868b">19</div>
<div class="t" style="right:1724.50px;top:339.78px;font-size:29px;line-height:29px;letter-spacing:-0.84px;font-family:'Liberation Mono', monospace;color:#c4c7cb">20</div>
<div class="t" style="right:1724.50px;top:372.78px;font-size:29px;line-height:29px;letter-spacing:-0.84px;font-family:'Liberation Mono', monospace;color:#80868b">21</div>
<div class="t" style="right:1724.50px;top:405.78px;font-size:29px;line-height:29px;letter-spacing:-0.84px;font-family:'Liberation Mono', monospace;color:#ffffff">22</div>
<div class="t" style="right:1724.50px;top:438.78px;font-size:29px;line-height:29px;letter-spacing:-0.84px;font-family:'Liberation Mono', monospace;color:#80868b">23</div>
<div class="t" style="right:1724.50px;top:471.78px;font-size:29px;line-height:29px;letter-spacing:-0.84px;font-family:'Liberation Mono', monospace;color:#80868b">24</div>
<div class="t" style="right:1724.50px;top:504.78px;font-size:29px;line-height:29px;letter-spacing:-0.84px;font-family:'Liberation Mono', monospace;color:#c4c7cb">25</div>
<div class="t" style="right:1724.50px;top:537.78px;font-size:29px;line-height:29px;letter-spacing:-0.84px;font-family:'Liberation Mono', monospace;color:#80868b">26</div>
<div class="t" style="right:1724.50px;top:570.78px;font-size:29px;line-height:29px;letter-spacing:-0.84px;font-family:'Liberation Mono', monospace;color:#c4c7cb">27</div>
<div class="t" style="right:1724.50px;top:603.78px;font-size:29px;line-height:29px;letter-spacing:-0.84px;font-family:'Liberation Mono', monospace;color:#80868b">28</div>
<div class="t" style="right:1724.50px;top:636.78px;font-size:29px;line-height:29px;letter-spacing:-0.84px;font-family:'Liberation Mono', monospace;color:#80868b">29</div>
<div class="t" style="right:1724.50px;top:669.78px;font-size:29px;line-height:29px;letter-spacing:-0.84px;font-family:'Liberation Mono', monospace;color:#80868b">30</div>
<div class="t" style="right:1724.50px;top:702.78px;font-size:29px;line-height:29px;letter-spacing:-0.84px;font-family:'Liberation Mono', monospace;color:#80868b">31</div>
<div class="t" style="right:1724.50px;top:735.78px;font-size:29px;line-height:29px;letter-spacing:-0.84px;font-family:'Liberation Mono', monospace;color:#80868b">32</div>
<div class="t" style="right:1724.50px;top:768.78px;font-size:29px;line-height:29px;letter-spacing:-0.84px;font-family:'Liberation Mono', monospace;color:#80868b">33</div>
<div class="t" style="right:1724.50px;top:801.78px;font-size:29px;line-height:29px;letter-spacing:-0.84px;font-family:'Liberation Mono', monospace;color:#c4c7cb">34</div>
<div class="r" style="left:338.00px;top:124.00px;width:1061.00px;height:65.00px;background:#f1f3f4;"></div>
<div class="r" style="left:338.00px;top:189.00px;width:1061.00px;height:2.00px;background:#cacdd1;"></div>
<div class="t" style="left:432.00px;top:140.60px;font-size:30px;line-height:30px;color:#5f6368;font-weight:400;font-family:'Liberation Sans', sans-serif;letter-spacing:-0.45px;">(index)</div>
<div class="t" style="left:590.50px;top:140.60px;font-size:30px;line-height:30px;color:#1f1f1f;font-weight:400;font-family:'Liberation Sans', sans-serif;letter-spacing:0.5px;">app.component.ts</div>
<div class="r" style="left:568.00px;top:187.00px;width:318.00px;height:4.00px;background:#1a73e8;"></div>
<div class="r" style="left:338.00px;top:962.00px;width:1061.00px;height:68.00px;background:#f1f3f4;"></div>
<div class="r" style="left:338.00px;top:962.00px;width:1061.00px;height:2.00px;background:#cacdd1;"></div>
<div class="r" style="left:428px;top:964px;width:956px;height:66px;overflow:hidden">
<div class="t" style="left:4.70px;top:19.10px;font-size:30px;line-height:30px;color:#5f6368;font-weight:400;font-family:'Liberation Sans', sans-serif;letter-spacing:0.19px;">Line 22, Column 19</div>
<div class="t" style="left:278.00px;top:19.10px;font-size:30px;line-height:30px;color:#5f6368;font-weight:400;font-family:'Liberation Sans', sans-serif;letter-spacing:0.11px">(source mapped from <span style="text-decoration:underline;text-underline-offset:3px">main.fa8bfa0e23f1eb71.js</span>)</div>
<div class="t" style="left:940.00px;top:19.10px;font-size:30px;line-height:30px;color:#5f6368;font-weight:400;font-family:'Liberation Sans', sans-serif;">Coverage: n/a</div>
</div>
<div class="r" style="left:1399.00px;top:123.00px;width:2.00px;height:907.00px;background:#cacdd1;"></div>
<div class="r" style="left:1401.00px;top:124.00px;width:753.00px;height:65.00px;background:#f1f3f4;"></div>
<div class="r" style="left:1401.00px;top:189.00px;width:753.00px;height:2.00px;background:#cacdd1;"></div>
<div class="r" style="left:1401.00px;top:191.00px;width:753.00px;height:70.50px;background:#fffbe6;"></div>
<div class="r" style="left:1401.00px;top:261.00px;width:753.00px;height:2.00px;background:#d6d6d6;"></div>
<div class="t" style="left:1454.20px;top:210.10px;font-size:30px;line-height:30px;color:#6b5a26;font-weight:700;font-family:'Liberation Sans', sans-serif;letter-spacing:-0.03px;">Paused on breakpoint</div>
<div class="r" style="left:1401.00px;top:263.00px;width:753.00px;height:53.50px;background:#f1f3f4;"></div>
<div class="r" style="left:1401.00px;top:316.00px;width:753.00px;height:2.00px;background:#d5d7db;"></div>
<div class="t" style="left:1444.70px;top:273.60px;font-size:30px;line-height:30px;color:#28303a;font-weight:400;font-family:'Liberation Sans', sans-serif;letter-spacing:0.1px;">Watch</div>
<div class="r" style="left:1401.00px;top:318.00px;width:753.00px;height:52.50px;background:#f1f3f4;"></div>
<div class="r" style="left:1401.00px;top:370.00px;width:753.00px;height:2.00px;background:#d5d7db;"></div>
<div class="t" style="left:1443.00px;top:328.10px;font-size:30px;line-height:30px;color:#28303a;font-weight:400;font-family:'Liberation Sans', sans-serif;letter-spacing:0.28px;">Breakpoints</div>
<div class="r" style="left:1401.00px;top:372.00px;width:753.00px;height:98.50px;background:#fefdc8;"></div>
<div class="r" style="left:2147.00px;top:372.00px;width:7.00px;height:98.50px;background:#6f6236;"></div>
<div class="r" style="left:1442.00px;top:388.00px;width:30.00px;height:30.00px;background:#1a73e8;border-radius:4px"></div>
<div class="t" style="left:1486.00px;top:388.10px;font-size:30px;line-height:30px;color:#28303a;font-weight:400;font-family:'Liberation Sans', sans-serif;letter-spacing:0.41px;">app.component.ts:22</div>
<div class="t" style="left:1487px;top:431.28px;font-size:29px;line-height:29px;letter-spacing:-0.84px;font-family:'Liberation Mono', monospace;color:#27313b">await Promise.resolve().then(() => ti…</div>
<div class="r" style="left:1401.00px;top:470.50px;width:753.00px;height:2.00px;background:#d5d7db;"></div>
<div class="r" style="left:1401.00px;top:472.50px;width:753.00px;height:53.00px;background:#f1f3f4;"></div>
<div class="r" style="left:1401.00px;top:525.50px;width:753.00px;height:2.00px;background:#d5d7db;"></div>
<div class="t" style="left:1443.00px;top:483.60px;font-size:30px;line-height:30px;color:#28303a;font-weight:400;font-family:'Liberation Sans', sans-serif;letter-spacing:0.75px;">Scope</div>
<div class="r" style="left:1401.00px;top:527.50px;width:753.00px;height:52.00px;background:#f1f3f4;"></div>
<div class="r" style="left:1401.00px;top:579.50px;width:753.00px;height:2.00px;background:#d5d7db;"></div>
<div class="t" style="left:1443.70px;top:538.60px;font-size:30px;line-height:30px;color:#28303a;font-weight:400;font-family:'Liberation Sans', sans-serif;letter-spacing:0.05px;">Call Stack</div>
<div class="r" style="left:1401.00px;top:581.50px;width:753.00px;height:1000.00px;background:#ffffff;"></div>
<div class="r" style="left:1415.50px;top:592.00px;width:29.00px;height:29.00px;background:transparent;box-sizing:border-box;border:2.5px solid #707378;border-radius:5px"></div>
<div class="t" style="left:1454.10px;top:593.10px;font-size:30px;line-height:30px;color:#575c62;font-weight:400;font-family:'Liberation Sans', sans-serif;letter-spacing:0.14px;">Show ignore-listed frames</div>
<div class="r" style="left:1401.00px;top:634.00px;width:753.00px;height:2.00px;background:#d5d7db;"></div>
<div class="t" style="left:1449.80px;top:647.90px;font-size:30px;line-height:30px;color:#28303a;font-weight:400;font-family:'Liberation Sans', sans-serif;letter-spacing:-0.07px;">(anonymous)</div>
<div class="t" style="right:45.06px;top:647.90px;font-size:30px;line-height:30px;color:#5f6368;font-weight:400;font-family:'Liberation Sans', sans-serif;text-align:right;letter-spacing:0.44px;">app.component.ts:22</div>
<div class="r" style="left:1401.00px;top:689.00px;width:753.00px;height:2.00px;background:#d5d7db;"></div>
<div class="t" style="left:1449.80px;top:702.90px;font-size:30px;line-height:30px;color:#28303a;font-weight:400;font-family:'Liberation Sans', sans-serif;letter-spacing:0.19px;">increment</div>
<div class="t" style="right:45.06px;top:702.90px;font-size:30px;line-height:30px;color:#5f6368;font-weight:400;font-family:'Liberation Sans', sans-serif;text-align:right;letter-spacing:0.44px;">app.component.ts:21</div>
<div class="r" style="left:1401.00px;top:744.00px;width:753.00px;height:2.00px;background:#d5d7db;"></div>
<div class="t" style="left:1450.50px;top:757.90px;font-size:30px;line-height:30px;color:#28303a;font-weight:400;font-family:'Liberation Sans', sans-serif;letter-spacing:0px;">i0</div>
<div class="t" style="right:45.06px;top:757.90px;font-size:30px;line-height:30px;color:#5f6368;font-weight:400;font-family:'Liberation Sans', sans-serif;text-align:right;letter-spacing:0.44px;">app.component.ts:13</div>
<div class="r" style="left:1401.00px;top:799.00px;width:753.00px;height:2.00px;background:#d5d7db;"></div>
<div class="t" style="left:1450.80px;top:812.90px;font-size:30px;line-height:30px;color:#28303a;font-weight:400;font-family:'Liberation Sans', sans-serif;letter-spacing:0.33px;">onClick</div>
<div class="t" style="right:45.05px;top:812.90px;font-size:30px;line-height:30px;color:#5f6368;font-weight:400;font-family:'Liberation Sans', sans-serif;text-align:right;letter-spacing:0.45px;">button.component.ts:18</div>
<div class="r" style="left:1401.00px;top:854.00px;width:753.00px;height:2.00px;background:#d5d7db;"></div>
<div class="t" style="left:1450.50px;top:867.90px;font-size:30px;line-height:30px;color:#28303a;font-weight:400;font-family:'Liberation Sans', sans-serif;letter-spacing:0px;">i0</div>
<div class="t" style="right:45.10px;top:867.90px;font-size:30px;line-height:30px;color:#5f6368;font-weight:400;font-family:'Liberation Sans', sans-serif;text-align:right;letter-spacing:0.4px;">button.component.html:1</div>
<div class="r" style="left:1401.00px;top:909.00px;width:753.00px;height:2.00px;background:#d5d7db;"></div>
<div class="t" style="left:1449.80px;top:922.90px;font-size:30px;line-height:30px;color:#28303a;font-weight:400;font-family:'Liberation Sans', sans-serif;letter-spacing:-0.07px;">(anonymous)</div>
<div class="t" style="right:45.09px;top:922.90px;font-size:30px;line-height:30px;color:#5f6368;font-weight:400;font-family:'Liberation Sans', sans-serif;text-align:right;letter-spacing:0.41px;">zone-async-stack-tagging.ts:32</div>
<div class="r" style="left:1401.00px;top:964.00px;width:753.00px;height:2.00px;background:#d5d7db;"></div>
<div class="t" style="left:1450.80px;top:977.90px;font-size:30px;line-height:30px;color:#28303a;font-weight:400;font-family:'Liberation Sans', sans-serif;letter-spacing:0px;">onInvokeTask</div>
<div class="t" style="right:45.09px;top:977.90px;font-size:30px;line-height:30px;color:#5f6368;font-weight:400;font-family:'Liberation Sans', sans-serif;text-align:right;letter-spacing:0.41px;">zone-async-stack-tagging.ts:31</div>
<div class="r" style="left:1401.00px;top:1019.00px;width:753.00px;height:2.00px;background:#d5d7db;"></div>
<div class="r" style="left:1401.00px;top:1020.00px;width:753.00px;height:20.00px;background:#f1f3f4;"></div>
<svg style="position:absolute;left:-112px;top:-76px" width="2378" height="1254" viewBox="0 0 2378 1254"><path d="M147,179.3 H139.6 Q138.5,179.3 138.5,178.2 V152.6 Q138.5,151.5 139.6,151.5 H164.2 Q165.3,151.5 165.3,152.6 V159.3" fill="none" stroke="#6e6e6e" stroke-width="2.3"/><path d="M150.2,162.7 L169.3,167.8 L162.2,171 L169.8,178.6 L167.4,181.2 L159.7,173.4 L154.2,181.8 Z" fill="#6e6e6e"/><path d="M211.2,158.5 V147.8 Q211.2,146.5 212.5,146.5 H236.6 Q237.9,146.5 237.9,147.8 V182 Q237.9,183.3 236.6,183.3 H219" fill="none" stroke="#6e6e6e" stroke-width="2.3"/><path d="M204,157.7 H217.5 Q219.2,157.7 219.2,159.4 V182.7 Q219.2,184.4 217.5,184.4 H204 Q202.2,184.4 202.2,182.7 V159.4 Q202.2,157.7 204,157.7 Z M204.4,162.4 V180.2 H217 V162.4 Z" fill="#6e6e6e" fill-rule="evenodd"/><path d="M1809,156 L1818,165 L1809,174 M1819.5,156 L1828.5,165 L1819.5,174" fill="none" stroke="#707274" stroke-width="3.3"/><path d="M2027,150.1 H2046 Q2050,150.1 2050,154.1 V169.5 Q2050,173.5 2046,173.5 H2028.5 L2023,178.8 V154.1 Q2023,150.1 2027,150.1 Z" fill="#1a73e8"/><rect x="2028.8" y="157.2" width="17.2" height="2.8" fill="#fff"/><rect x="2028.8" y="163.6" width="11" height="2.8" fill="#fff"/><path d="M2067.4,154.5 H2070.8 V176.2 H2067.4 V159.3 Q2065,161.5 2061.4,162.2 V159.4 Q2065.5,158.2 2067.4,154.5 Z" fill="#505459"/><path d="M2150.93,152.38 L2151.45,147.79 L2160.55,147.79 L2161.07,152.38 L2164.39,154.30 L2168.63,152.46 L2173.18,160.34 L2169.46,163.09 L2169.46,166.91 L2173.18,169.66 L2168.63,177.54 L2164.39,175.70 L2161.07,177.62 L2160.55,182.21 L2151.45,182.21 L2150.93,177.62 L2147.61,175.70 L2143.37,177.54 L2138.82,169.66 L2142.54,166.91 L2142.54,163.09 L2138.82,160.34 L2143.37,152.46 L2147.61,154.30 Z M2162.10,165.00 A6.1,6.1 0 1 0 2149.90,165.00 A6.1,6.1 0 1 0 2162.10,165.00 Z" fill="#6e6e6e" fill-rule="evenodd"/><circle cx="2227.3" cy="153.6" r="4.1" fill="#6e6e6e"/><circle cx="2227.3" cy="166.2" r="4.1" fill="#6e6e6e"/><circle cx="2227.3" cy="178.7" r="4.1" fill="#6e6e6e"/><path d="M254,223 L262.8,232 L254,241 M264.6,223 L273.4,232 L264.6,241" fill="none" stroke="#6e6e6e" stroke-width="3.4"/><circle cx="408.1" cy="220.8" r="3.8" fill="#6e6e6e"/><circle cx="408.1" cy="233.2" r="3.8" fill="#6e6e6e"/><circle cx="408.1" cy="245.7" r="3.8" fill="#6e6e6e"/><rect x="473.3" y="218.1" width="35.4" height="30.2" fill="none" stroke="#6e6e6e" stroke-width="2.3"/><line x1="483.7" y1="218" x2="483.7" y2="248.4" stroke="#6e6e6e" stroke-width="2.2"/><path d="M490.1,233 L502.7,225.2 V241 Z" fill="#6e6e6e"/><path d="M969.2,225.6 L983.6,239.6 M983.6,225.6 L969.2,239.6" stroke="#202124" stroke-width="2.7"/><rect x="1454.7" y="218.2" width="35" height="30.3" fill="none" stroke="#a5a7aa" stroke-width="2.4"/><line x1="1479.5" y1="218" x2="1479.5" y2="248.5" stroke="#a5a7aa" stroke-width="2.4"/><path d="M1461.2,225.1 V240.9 L1473.2,233 Z" fill="#a5a7aa"/><rect x="1538.9" y="219.3" width="7.5" height="25.2" fill="#1a73e8"/><path d="M1551.1,219.3 L1571.1,231.9 L1551.1,244.5 Z" fill="#1a73e8"/><path d="M1569.2,257.6 L1581.8,245.2 V257.6 Z" fill="#6e6e6e"/><path d="M1608.3,239.5 C1611.5,221 1634.5,216.5 1641,235.5" fill="none" stroke="#6e6e6e" stroke-width="6.4"/><path d="M1632.2,237.4 L1648.6,231.9 L1643.6,244.1 Z" fill="#6e6e6e"/><circle cx="1624.1" cy="238.1" r="4.9" fill="#6e6e6e"/><rect x="1691.9" y="217.2" width="7" height="10.5" fill="#6e6e6e"/><path d="M1684,227 H1706.6 L1695.3,236.6 Z" fill="#6e6e6e"/><circle cx="1695.3" cy="244.6" r="5" fill="#6e6e6e"/><rect x="1761.6" y="226.2" width="7.2" height="10.3" fill="#6e6e6e"/><path d="M1754.3,226.8 H1776.1 L1765.1,217 Z" fill="#6e6e6e"/><circle cx="1765.1" cy="244.5" r="5" fill="#6e6e6e"/><rect x="1816.5" y="227" width="10.5" height="7" fill="#6e6e6e"/><path d="M1826.6,219.9 V241.1 L1836.1,230.5 Z" fill="#6e6e6e"/><circle cx="1843.2" cy="230.3" r="5" fill="#6e6e6e"/><rect x="1879" y="212.3" width="2" height="39.4" fill="#c6c9ce"/><path d="M1902.2,222 H1920 L1907,241.6 H1902.2 Z" fill="#6e6e6e"/><path d="M1933.8,222 H1938.3 L1947.3,231.8 L1938.3,241.6 H1920.3 Z" fill="#6e6e6e"/><line x1="1908.7" y1="250.5" x2="1932.3" y2="213" stroke="#6e6e6e" stroke-width="4.6"/><path d="M1988.6,214.5 H2003.3 L2013.6,224.8 V239.1 L2003.3,249.4 H1988.6 L1978.3,239.1 V224.8 Z M1988.7,224.6 V239.3 H1993.1 V224.6 Z M1998.5,224.6 V239.3 H2003.2 V224.6 Z" fill="#6e6e6e" fill-rule="evenodd"/><circle cx="1541.5" cy="300.4" r="12.4" fill="#5a8ee6"/><circle cx="1541.3" cy="293.2" r="2.1" fill="#fff"/><path d="M1538,297.8 H1543.2 V306.2 H1545.2 V308.2 H1537.2 V306.2 H1539.4 V299.8 H1538 Z" fill="#fff"/><path d="M1530.9,356.8 V374 L1543.1,365.4 Z" fill="#6e6e6e"/><path d="M1528.6,413.9 H1545.7 L1537.2,428.6 Z" fill="#6e6e6e"/><path d="M1530.9,566.8 V584 L1543.1,575.4 Z" fill="#6e6e6e"/><path d="M1528.6,624 H1545.7 L1537.2,638.7 Z" fill="#6e6e6e"/><path d="M1560.5,478.8 L1566.3,484.6 L1577.6,470.8" fill="none" stroke="#fff" stroke-width="4.4"/><path d="M1526.1,729.2 H1534 V724 L1546.4,736.3 L1534,748.7 V743.7 H1526.1 Z" fill="#3e7bf1"/><path d="M486,1061.3 C480.5,1061.3 478.6,1063 478.6,1068 V1070.5 C478.6,1072.8 477,1074 474,1074 C477,1074 478.6,1075.2 478.6,1077.5 V1080.2 C478.6,1085.2 480.5,1086.9 486,1086.9" fill="none" stroke="#6e6e6e" stroke-width="4.2" stroke-linecap="round"/><path d="M496.5,1061.3 C502,1061.3 503.9,1063 503.9,1068 V1070.5 C503.9,1072.8 505.5,1074 508.5,1074 C505.5,1074 503.9,1075.2 503.9,1077.5 V1080.2 C503.9,1085.2 502,1086.9 496.5,1086.9" fill="none" stroke="#6e6e6e" stroke-width="4.2" stroke-linecap="round"/><path d="M92,384.3 H105.5 L111,389.8 H123 Q125,389.8 125,391.8 V411.8 Q125,413.8 123,413.8 H92 Q90,413.8 90,411.8 V386.3 Q90,384.3 92,384.3 Z" fill="#e07a20"/><path d="M122,434.7 H135.5 L141,440.2 H153 Q155,440.2 155,442.2 V462.2 Q155,464.2 153,464.2 H122 Q120,464.2 120,462.2 V436.7 Q120,434.7 122,434.7 Z" fill="#e07a20"/><path d="M120,487.7 V506.2 L133.7,496.95 Z" fill="#5f6368"/><path d="M152,484.7 H165.5 L171,490.2 H183 Q185,490.2 185,492.2 V512.2 Q185,514.2 183,514.2 H152 Q150,514.2 150,512.2 V486.7 Q150,484.7 152,484.7 Z" fill="#e07a20"/><path d="M120,537.7 V556.2 L133.7,546.95 Z" fill="#5f6368"/><path d="M152,534.7 H165.5 L171,540.2 H183 Q185,540.2 185,542.2 V562.2 Q185,564.2 183,564.2 H152 Q150,564.2 150,562.2 V536.7 Q150,534.7 152,534.7 Z" fill="#e07a20"/><path d="M152,577 H167.5 L180,589.5 V615 Q180,617 178,617 H152 Q150,617 150,615 V579 Q150,577 152,577 Z" fill="#dcb328"/><path d="M167.6,579.6 V589.6 H177.4 Z" fill="#dadbdc"/><path d="M152,627 H167.5 L180,639.5 V665 Q180,667 178,667 H152 Q150,667 150,665 V629 Q150,627 152,627 Z" fill="#dcb328"/><path d="M167.6,629.6 V639.6 H177.4 Z" fill="#fff"/><path d="M122,683.5 H135.5 L141,689.0 H153 Q155,689.0 155,691.0 V711.0 Q155,713.0 153,713.0 H122 Q120,713.0 120,711.0 V685.5 Q120,683.5 122,683.5 Z" fill="#e07a20"/><path d="M122,727 H137.5 L150,739.5 V765 Q150,767 148,767 H122 Q120,767 120,765 V729 Q120,727 122,727 Z" fill="#dcb328"/><path d="M137.6,729.6 V739.6 H147.4 Z" fill="#fff"/><path d="M122,777 H137.5 L150,789.5 V815 Q150,817 148,817 H122 Q120,817 120,815 V779 Q120,777 122,777 Z" fill="#dcb328"/><path d="M137.6,779.6 V789.6 H147.4 Z" fill="#fff"/><path d="M122,827 H137.5 L150,839.5 V865 Q150,867 148,867 H122 Q120,867 120,865 V829 Q120,827 122,827 Z" fill="#6b45c9"/><path d="M137.6,829.6 V839.6 H147.4 Z" fill="#fff"/><path d="M122,1027 H137.5 L150,1039.5 V1065 Q150,1067 148,1067 H122 Q120,1067 120,1065 V1029 Q120,1027 122,1027 Z" fill="#808285"/><path d="M137.6,1029.6 V1039.6 H147.4 Z" fill="#fff"/><path d="M122,1077 H137.5 L150,1089.5 V1115 Q150,1117 148,1117 H122 Q120,1117 120,1115 V1079 Q120,1077 122,1077 Z" fill="#dcb328"/><path d="M137.6,1079.6 V1089.6 H147.4 Z" fill="#fff"/><path d="M100,1011 H118 A8.5,8.5 0 0 0 118.5,994 A10,10 0 0 0 104,986" fill="none" stroke="#4a5058" stroke-width="3"/></svg>
<div class="r" style="left:1393.00px;top:520.00px;width:739.70px;height:501.80px;background:transparent;box-sizing:border-box;border:10px solid #0a2bfd;border-radius:22px;box-shadow:0 2px 3px rgba(0,0,0,0.28), inset 0 1.5px 3px rgba(0,0,0,0.32)"></div>
</div>
</body></html>
